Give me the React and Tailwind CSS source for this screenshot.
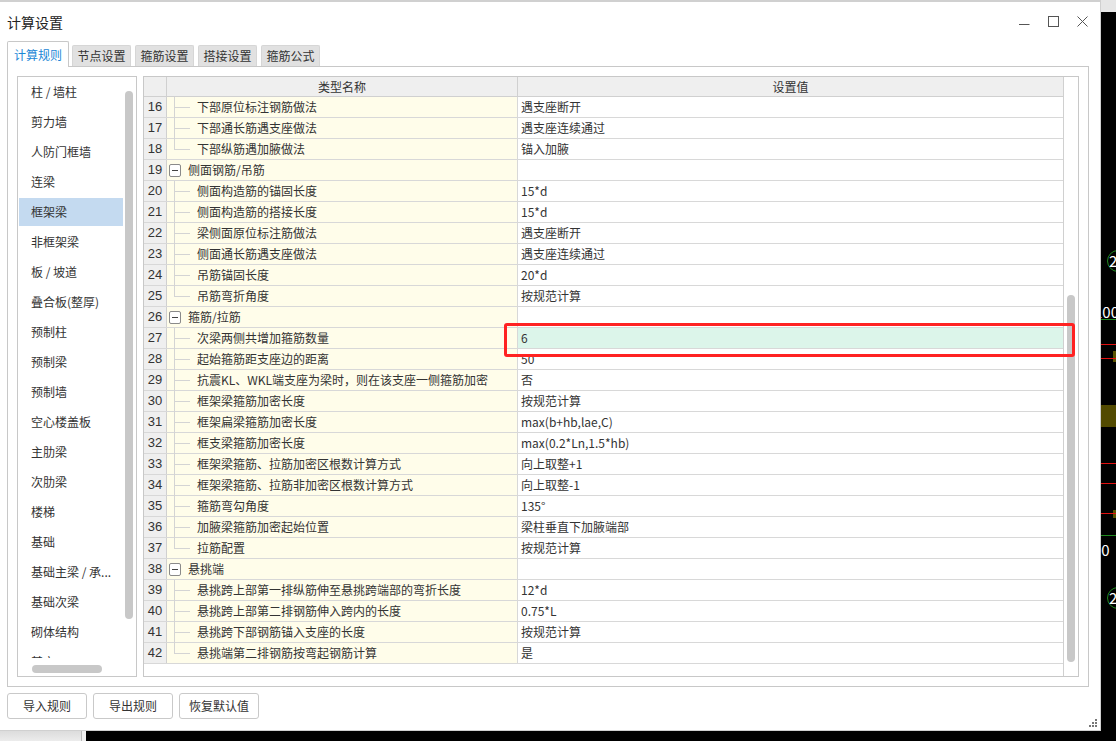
import React from 'react';

const categories = [
  '柱 / 墙柱',
  '剪力墙',
  '人防门框墙',
  '连梁',
  '框架梁',
  '非框架梁',
  '板 / 坡道',
  '叠合板(整厚)',
  '预制柱',
  '预制梁',
  '预制墙',
  '空心楼盖板',
  '主肋梁',
  '次肋梁',
  '楼梯',
  '基础',
  '基础主梁 / 承...',
  '基础次梁',
  '砌体结构',
  '其它',
];

const rows = [
  { n: 16, name: '下部原位标注钢筋做法', value: '遇支座断开' },
  { n: 17, name: '下部通长筋遇支座做法', value: '遇支座连续通过' },
  { n: 18, name: '下部纵筋遇加腋做法', value: '锚入加腋', last: true },
  { n: 19, name: '侧面钢筋/吊筋', group: true },
  { n: 20, name: '侧面构造筋的锚固长度', value: '15*d' },
  { n: 21, name: '侧面构造筋的搭接长度', value: '15*d' },
  { n: 22, name: '梁侧面原位标注筋做法', value: '遇支座断开' },
  { n: 23, name: '侧面通长筋遇支座做法', value: '遇支座连续通过' },
  { n: 24, name: '吊筋锚固长度', value: '20*d' },
  { n: 25, name: '吊筋弯折角度', value: '按规范计算', last: true },
  { n: 26, name: '箍筋/拉筋', group: true },
  { n: 27, name: '次梁两侧共增加箍筋数量', value: '6', active: true },
  { n: 28, name: '起始箍筋距支座边的距离', value: '50' },
  { n: 29, name: '抗震KL、WKL端支座为梁时，则在该支座一侧箍筋加密', value: '否' },
  { n: 30, name: '框架梁箍筋加密长度', value: '按规范计算' },
  { n: 31, name: '框架扁梁箍筋加密长度', value: 'max(b+hb,lae,C)' },
  { n: 32, name: '框支梁箍筋加密长度', value: 'max(0.2*Ln,1.5*hb)' },
  { n: 33, name: '框架梁箍筋、拉筋加密区根数计算方式', value: '向上取整+1' },
  { n: 34, name: '框架梁箍筋、拉筋非加密区根数计算方式', value: '向上取整-1' },
  { n: 35, name: '箍筋弯勾角度', value: '135°' },
  { n: 36, name: '加腋梁箍筋加密起始位置', value: '梁柱垂直下加腋端部' },
  { n: 37, name: '拉筋配置', value: '按规范计算', last: true },
  { n: 38, name: '悬挑端', group: true },
  { n: 39, name: '悬挑跨上部第一排纵筋伸至悬挑跨端部的弯折长度', value: '12*d' },
  { n: 40, name: '悬挑跨上部第二排钢筋伸入跨内的长度', value: '0.75*L' },
  { n: 41, name: '悬挑跨下部钢筋锚入支座的长度', value: '按规范计算' },
  { n: 42, name: '悬挑端第二排钢筋按弯起钢筋计算', value: '是', last: true },
];

const tabs = ['节点设置', '箍筋设置', '搭接设置', '箍筋公式'];

const NameCell = ({ row }) => {
  if (row.group) {
    return (
      <div className="flex h-full items-center pl-[2px]">
        <span className="flex h-[13px] w-[12px] items-center justify-center rounded-[2px] border border-[#8a8a8a] bg-white">
          <span className="h-px w-[6px] bg-[#444]" />
        </span>
        <span className="ml-[7px]">{row.name}</span>
      </div>
    );
  }
  return (
    <div className="relative flex h-full items-center pl-[30px]">
      <span
        className={`absolute left-[7px] top-0 w-px bg-[#d4d4d4] ${row.last ? 'h-[10px]' : 'h-[21px]'}`}
      />
      <span className="absolute left-[7px] top-[10px] h-px w-[16px] bg-[#d4d4d4]" />
      {row.name}
    </div>
  );
};

const CadBackdrop = () => (
  <>
    <div className="absolute left-[1100px] top-0 h-[12px] w-[16px] bg-[#e6e6e6]" />
    <div className="absolute left-[1107px] top-[250px] h-[22px] w-[22px] rounded-full border border-[#1f8a1f]" />
    <div className="absolute left-[1109px] top-[251px] text-[15px] leading-[20px] text-white">2</div>
    <div className="absolute left-[1094px] top-[301px] text-[15px] text-white">100</div>
    <div className="absolute left-[1101px] top-[319px] h-px w-[15px] bg-[#1f8a1f]" />
    <div className="absolute left-[1101px] top-[344px] h-px w-[15px] bg-[#e01010]" />
    <div className="absolute left-[1113px] top-[351px] h-[11px] w-[3px] bg-[#5a5200]" />
    <div className="absolute left-[1101px] top-[358px] h-px w-[15px] bg-[#e01010]" />
    <div className="absolute left-[1101px] top-[405px] h-[22px] w-[15px] bg-[#524a00]" />
    <div className="absolute left-[1101px] top-[463px] h-px w-[15px] bg-[#e01010]" />
    <div className="absolute left-[1101px] top-[483px] h-px w-[15px] bg-[#e01010]" />
    <div className="absolute left-[1113px] top-[510px] h-[8px] w-[3px] bg-[#5a5200]" />
    <div className="absolute left-[1101px] top-[513px] h-px w-[15px] bg-[#e01010]" />
    <div className="absolute left-[1101px] top-[535px] h-px w-[15px] bg-[#1f8a1f]" />
    <div className="absolute left-[1093px] top-[539px] text-[15px] text-white">00</div>
    <div className="absolute left-[1107px] top-[587px] h-[22px] w-[22px] rounded-full border border-[#1f8a1f]" />
    <div className="absolute left-[1109px] top-[588px] text-[15px] leading-[20px] text-white">2</div>
    <div className="absolute left-0 top-[731px] flex h-[10px] w-[86px]">
      <div className="h-full w-[81px] bg-gradient-to-b from-[#dcdcdc] to-[#ececec]" />
      <div className="h-full w-px bg-[#b8b8b8]" />
      <div className="h-full w-[4px] bg-[#f0f0f0]" />
    </div>
  </>
);

export default function App() {
  return (
    <div className="relative h-[741px] w-[1116px] overflow-hidden bg-black font-['Noto_Sans_CJK_SC',sans-serif] text-[12px] text-[#333]">
      <CadBackdrop />

      <div className="absolute left-0 top-0 flex h-[731px] w-[1101px] flex-col border-t-2 border-r border-b border-[#d0d0d0] bg-white">
        {/* title bar */}
        <div className="flex h-[39px] items-center justify-between pl-[7px] pr-[12px]">
          <span className="text-[14px] leading-none text-[#222]">计算设置</span>
          <div className="flex items-center gap-[18px] text-[#555]">
            <svg width="11" height="11" viewBox="0 0 11 11">
              <path d="M0 8.5h10.5" stroke="#555" strokeWidth="1" />
            </svg>
            <svg width="11" height="11" viewBox="0 0 11 11">
              <rect x="0.5" y="0.5" width="10" height="10" fill="none" stroke="#555" strokeWidth="1" />
            </svg>
            <svg width="11" height="11" viewBox="0 0 11 11">
              <path d="M0.5 0.5l10 10M10.5 0.5l-10 10" stroke="#555" strokeWidth="1" />
            </svg>
          </div>
        </div>

        {/* tabs */}
        <div className="flex h-[25px] items-end pl-[7px]">
          <div className="relative z-10 -mb-px flex h-[26px] w-[62px] items-center justify-center rounded-t-[2px] border-l border-r border-t border-[#c8c8c8] bg-white text-[#1b87d6]">
            计算规则
          </div>
          {tabs.map((t, i) => (
            <div
              key={t}
              className={`flex h-[21px] w-[59px] items-center justify-center rounded-t-[2px] border-l border-r border-t border-[#d6d6d6] bg-[#e1e1e1] text-[#333] ${i === 0 ? 'ml-[3px]' : 'ml-[4px]'}`}
            >
              {t}
            </div>
          ))}
        </div>

        {/* frame */}
        <div className="ml-[7px] flex h-[621px] w-[1082px] border border-[#c8c8c8] pb-[9px] pl-[9px] pr-[9px] pt-[9px]">
          {/* category list */}
          <div className="flex h-[601px] w-[120px] flex-col border border-[#c8c8c8]">
            <div className="flex h-[581px]">
              <div className="flex w-[105px] flex-col gap-[2px] overflow-hidden pl-px pt-px">
                {categories.map((c) => (
                  <div
                    key={c}
                    className={`flex h-[28px] w-[104px] shrink-0 items-center whitespace-nowrap pl-[12px] ${c === '框架梁' ? 'bg-[#c4daf0]' : ''}`}
                  >
                    {c}
                  </div>
                ))}
              </div>
              <div className="ml-[2px] w-[8px]">
                <div className="mt-[14px] h-[528px] rounded-full bg-[#c8c8c8]" />
              </div>
            </div>
            <div className="ml-[14px] mt-[7px] h-[8px] w-[70px] rounded-full bg-[#c8c8c8]" />
          </div>

          {/* table */}
          <div className="relative ml-[6px] flex h-[601px] flex-1 border border-[#c8c8c8]">
            <div className="flex flex-1 flex-col">
              <div className="flex h-[20px] shrink-0 border-b border-[#d0d0d0] bg-[#efefef]">
                <div className="w-[23px] border-r border-[#d0d0d0]" />
                <div className="flex w-[351px] items-center justify-center border-r border-[#d0d0d0]">
                  类型名称
                </div>
                <div className="flex flex-1 items-center justify-center">设置值</div>
              </div>
              {rows.map((r) => (
                <div key={r.n} className="flex h-[21px] shrink-0 border-b border-[#d8d8d8]">
                  <div className="flex w-[23px] items-center justify-center border-r border-[#d0d0d0] bg-[#efefef] font-['Liberation_Sans',sans-serif] text-[13px] text-[#333]">
                    {r.n}
                  </div>
                  <div className="w-[351px] whitespace-nowrap border-r border-[#d8d8d8] bg-[#fffdea]">
                    <NameCell row={r} />
                  </div>
                  <div
                    className={`flex flex-1 items-center whitespace-nowrap pl-[3px] ${r.active ? 'bg-[#dcf5ea]' : 'bg-white'}`}
                  >
                    {r.value}
                  </div>
                </div>
              ))}
            </div>
            <div className="w-[15px] border-l border-[#d0d0d0]">
              <div className="ml-[3px] mt-[218px] h-[367px] w-[8px] rounded-full bg-[#c8c8c8]" />
            </div>
          </div>
        </div>

        {/* buttons */}
        <div className="ml-[7px] mt-[6px] flex gap-[6px]">
          {['导入规则', '导出规则', '恢复默认值'].map((b) => (
            <button
              key={b}
              className="flex h-[26px] w-[80px] items-center justify-center rounded-[3px] border border-[#c9c9c9] bg-white text-[12px] text-[#333]"
            >
              {b}
            </button>
          ))}
        </div>

        {/* resize grip */}
        <svg className="absolute bottom-[3px] right-[3px]" width="8" height="8" viewBox="0 0 8 8">
          <rect x="6" y="0" width="2" height="2" fill="#777" />
          <rect x="3" y="3" width="2" height="2" fill="#777" />
          <rect x="6" y="3" width="2" height="2" fill="#777" />
          <rect x="0" y="6" width="2" height="2" fill="#777" />
          <rect x="3" y="6" width="2" height="2" fill="#777" />
          <rect x="6" y="6" width="2" height="2" fill="#777" />
        </svg>
      </div>

      {/* annotation box */}
      <div className="absolute left-[504px] top-[323px] h-[34px] w-[571px] rounded-[3px] border-[3px] border-[#ff2222]" />
    </div>
  );
}
